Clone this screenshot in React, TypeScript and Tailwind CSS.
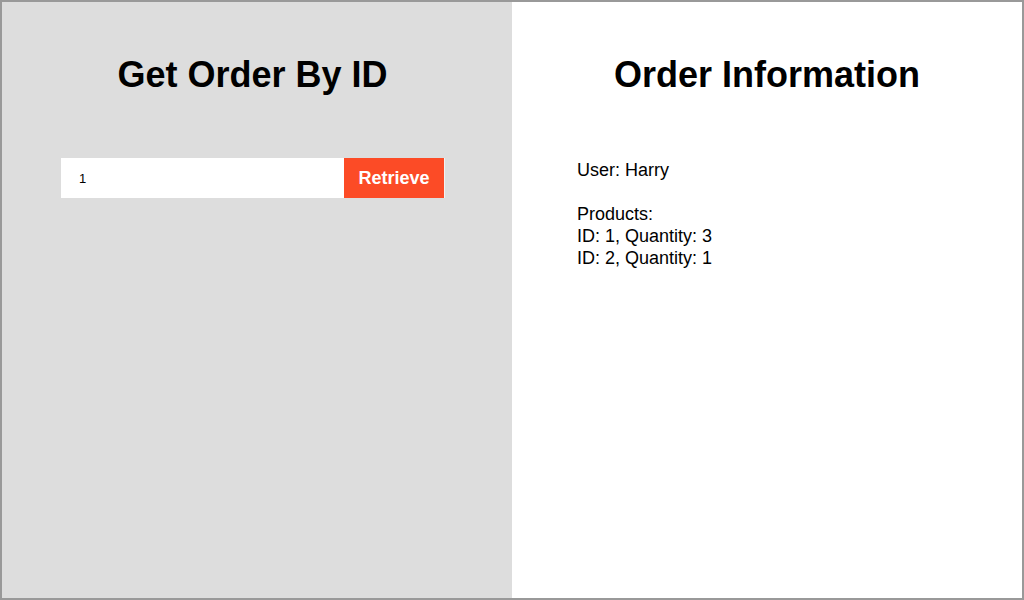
import React, { useState } from "react";

type Product = { id: number; quantity: number };

export default function App() {
  const [orderId, setOrderId] = useState("1");
  const user = "Harry";
  const products: Product[] = [
    { id: 1, quantity: 3 },
    { id: 2, quantity: 1 },
  ];

  return (
    <div className="flex h-[600px] w-[1024px] border-2 border-[#999999] font-['Liberation_Sans',Arial,sans-serif] text-black">
      {/* lookup form */}
      <div className="w-[510px] bg-[#dddddd] pl-[59px]">
        <h1 className="w-[383px] pt-[52px] text-center text-[36px] font-bold leading-[42px]">
          Get Order By ID
        </h1>
        <div className="mt-[62px] flex h-[40px]">
          <input
            value={orderId}
            onChange={(e) => setOrderId(e.target.value)}
            className="h-full w-[283px] shrink-0 bg-white pl-[18px] text-[13px] outline-none"
          />
          <button className="h-full w-[101px] shrink-0 border-r border-[#f2f2f2] bg-[#fc4b26] text-[18px] font-bold text-white">
            Retrieve
          </button>
        </div>
      </div>

      {/* order details */}
      <div className="flex-1 bg-white">
        <h1 className="pt-[52px] text-center text-[36px] font-bold leading-[42px]">
          Order Information
        </h1>
        <div className="mt-[63px] pl-[65px] text-[18px] leading-[22px]">
          <p>User: {user}</p>
          <p className="mt-[22px]">Products:</p>
          {products.map((p) => (
            <p key={p.id}>
              ID: {p.id}, Quantity: {p.quantity}
            </p>
          ))}
        </div>
      </div>
    </div>
  );
}
